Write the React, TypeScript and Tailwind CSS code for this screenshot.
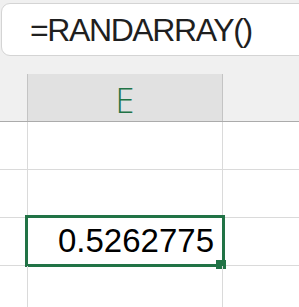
export default function App() {
  const rows = [0, 1, 2, 3];
  return (
    <div className="w-[299px] h-[307px] bg-[#f0f0f0] overflow-hidden font-['Liberation_Sans',sans-serif]">
      <div className="pt-[3px] pl-[1px]">
        <div className="h-[53px] w-[340px] bg-white border border-[#d4d4d4] rounded-[9px] flex items-center pl-[28px] text-[32px] tracking-[-1.4px] text-[#1f1f1f]">
          =RANDARRAY()
        </div>
      </div>

      <div className="mt-[18px] flex h-[48px] border-b border-[#ababab]">
        <div className="w-[27px]" />
        <div className="w-[196px] h-[47px] bg-[#e1e1e1] border-x border-[#c4c4c4] flex flex-col">
          <div className="flex-1 flex items-center justify-center pt-[1px] text-[34px] text-[#217346] font-['Open_Sans',sans-serif] font-light">E</div>
          <div className="h-[3px] bg-[#217346]" />
        </div>
        <div className="flex-1" />
      </div>

      <div className="bg-white">
        {rows.map((r) => (
          <div key={r} className="relative flex h-[48px] border-b border-[#dadada]">
            <div className="w-[28px] border-r border-[#dadada]" />
            <div className="w-[195px] border-r border-[#dadada]" />
            <div className="flex-1" />
            {r === 2 && (
              <>
                <div className="absolute left-[25px] top-[-3px] w-[200px] h-[52px] border-[3px] border-[#217346] flex items-center justify-end pr-[8px] text-[33px] text-black">
                  0.5262775
                </div>
                <div className="absolute left-[216px] top-[42px] w-[10px] h-[9px] bg-[#217346]" />
              </>
            )}
          </div>
        ))}
      </div>
    </div>
  );
}
